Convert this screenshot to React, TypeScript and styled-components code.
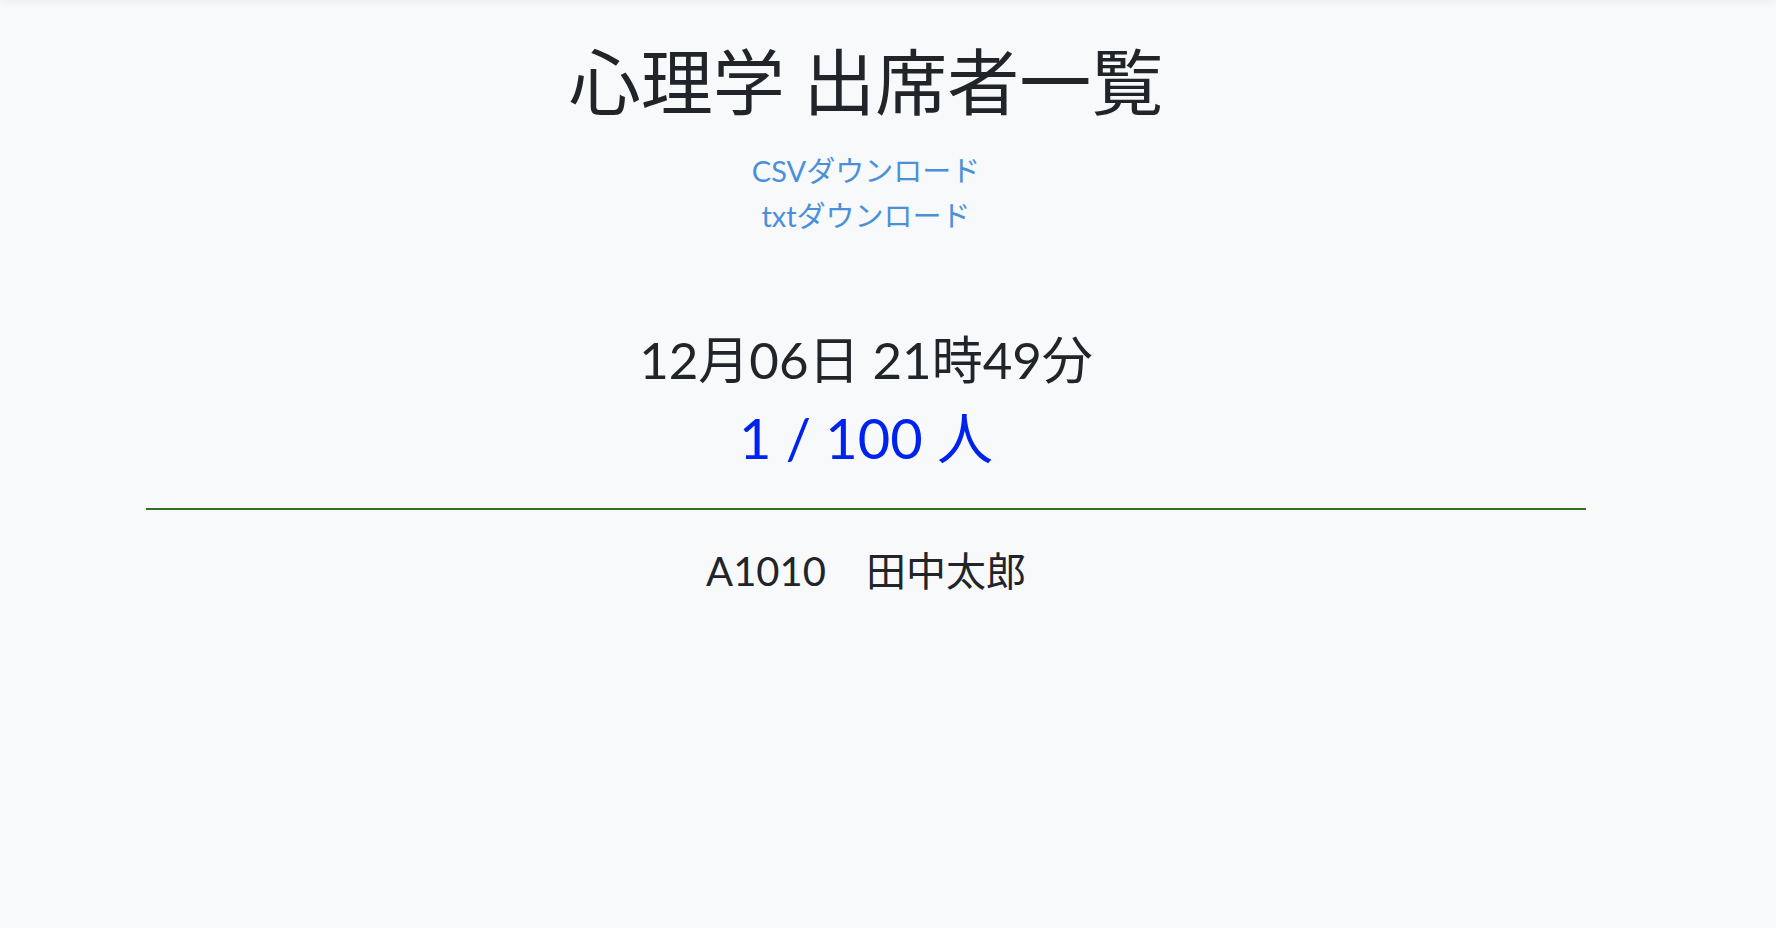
import React from 'react'
import styled, { createGlobalStyle } from 'styled-components'

const GlobalStyle = createGlobalStyle`
  html, body {
    margin: 0;
    padding: 0;
    background: #f8f9fa;
    color: #212529;
    font-family: "Lato", "Noto Sans CJK JP", sans-serif;
  }
`

const TopShade = styled.div`
  height: 0;
  box-shadow: 0 0 6px 1px rgba(0, 0, 0, 0.12);
`

const Main = styled.main`
  padding-right: 44px;
  display: flex;
  flex-direction: column;
  align-items: center;
  text-align: center;
`

const Title = styled.h1`
  margin: 38px 0 0;
  font-size: 72px;
  font-weight: 400;
  line-height: 1.2;
`

const Downloads = styled.div`
  margin-top: 24px;
  display: flex;
  flex-direction: column;
  align-items: center;
`

const DownloadLink = styled.a`
  font-size: 29px;
  line-height: 45px;
  color: #4a90d9;
  text-decoration: none;
`

const Stamp = styled.div`
  margin-top: 90px;
  font-size: 51px;
  line-height: 64px;
`

const Count = styled.div`
  margin-top: 12px;
  font-size: 56px;
  line-height: 1.2;
  color: #0022ee;
`

const Rule = styled.hr`
  align-self: stretch;
  margin: 36px 146px 0;
  border: 0;
  border-top: 2px solid #32711f;
`

const Entry = styled.div`
  margin-top: 37px;
  font-size: 40px;
  line-height: 1.2;
`

const attendees = [{ id: 'A1010', name: '田中太郎' }]

export default function App() {
  return (
    <>
      <GlobalStyle />
      <TopShade />
      <Main>
        <Title>心理学 出席者一覧</Title>
        <Downloads>
          <DownloadLink href="#">CSVダウンロード</DownloadLink>
          <DownloadLink href="#">txtダウンロード</DownloadLink>
        </Downloads>
        <Stamp>12月06日 21時49分</Stamp>
        <Count>1 / 100 人</Count>
        <Rule />
        {attendees.map((a) => (
          <Entry key={a.id}>
            {a.id}　{a.name}
          </Entry>
        ))}
      </Main>
    </>
  )
}
